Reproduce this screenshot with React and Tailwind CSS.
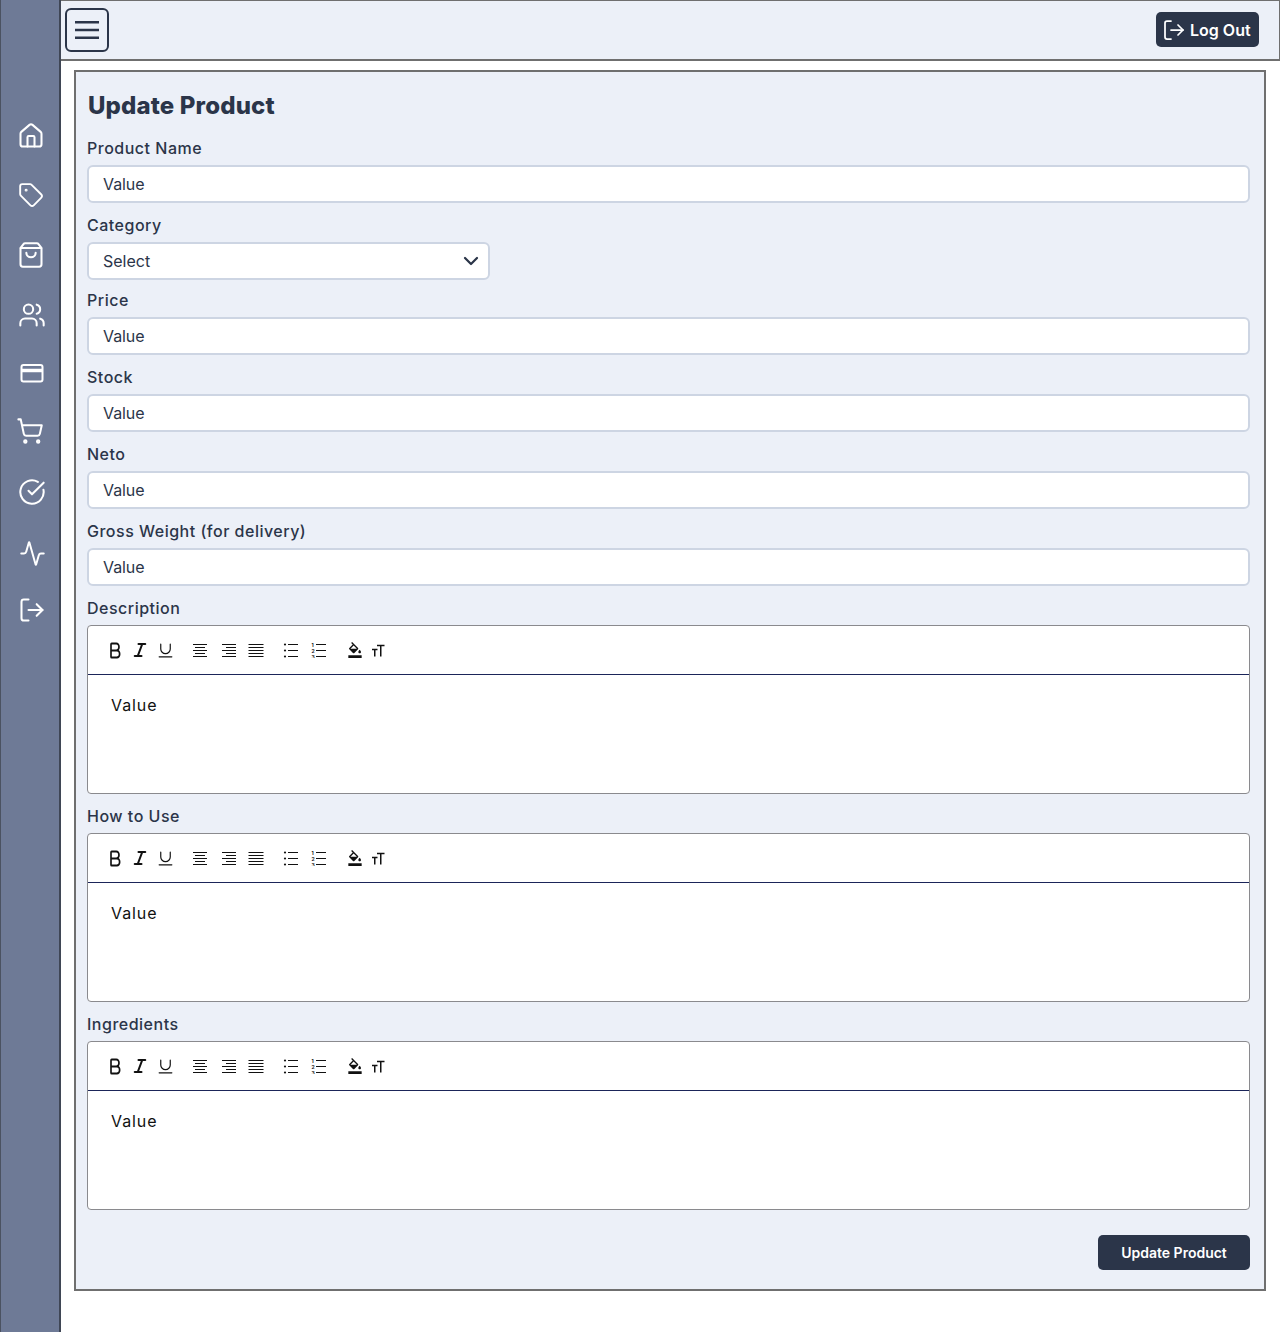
import React from 'react';
import {
  House,
  Tag,
  ShoppingBag,
  Users,
  ShoppingCart,
  CircleCheckBig,
  Activity,
  LogOut,
  ChevronDown,
  Bold,
  Italic,
  Underline,
} from 'lucide-react';
import { MdFormatColorFill } from 'react-icons/md';

const CardIcon = ({ className }) => (
  <svg viewBox="0 0 28 28" fill="none" stroke="currentColor" className={className}>
    <rect x="3.5" y="5" width="21" height="16.5" rx="2" strokeWidth="2" />
    <line x1="3.5" x2="24.5" y1="10.5" y2="10.5" strokeWidth="3.5" />
  </svg>
);

const navItems = [
  { icon: House, className: 'mt-0 ml-[16px]', size: 'w-7 h-7' },
  { icon: Tag, className: 'mt-[32px] ml-[17px]', size: 'w-[26px] h-[26px]' },
  { icon: ShoppingBag, className: 'mt-[33px] ml-[16px]', size: 'w-7 h-7' },
  { icon: Users, className: 'mt-[32px] ml-[17px]', size: 'w-7 h-7' },
  { icon: CardIcon, className: 'mt-[31px] ml-[17px]', size: 'w-7 h-7' },
  { icon: ShoppingCart, className: 'mt-[29px] ml-[15px]', size: 'w-7 h-7' },
  { icon: CircleCheckBig, className: 'mt-[33px] ml-[17px]', size: 'w-7 h-7' },
  { icon: Activity, className: 'mt-[34px] ml-[18px]', size: 'w-[27px] h-[27px]' },
  { icon: LogOut, className: 'mt-[29px] ml-[17px]', size: 'w-7 h-7' },
];

const Sidebar = () => (
  <aside className="w-[61px] shrink-0 bg-[#6e7a96] border-l border-r-2 border-l-[#4b5261] border-r-[#3f4655] pt-[122px]">
    {navItems.map((item, i) => {
      const Icon = item.icon;
      return (
        <div key={i} className={item.className}>
          <Icon className={`${item.size} text-white`} strokeWidth={1.75} />
        </div>
      );
    })}
  </aside>
);

const AlignIcon = ({ widths, align }) => (
  <svg width="16" height="15" viewBox="0 0 16 15" className="block" stroke="#111" strokeWidth="1">
    {widths.map((w, i) => {
      const x = align === 'center' ? (16 - w) / 2 : 16 - w;
      return <line key={i} x1={x} x2={x + w} y1={1.5 + i * 3} y2={1.5 + i * 3} />;
    })}
  </svg>
);

const BulletIcon = () => (
  <svg width="16" height="15" viewBox="0 0 16 15" className="block" fill="#111" stroke="#111">
    {[1.5, 7.5, 13.5].map((y) => (
      <g key={y}>
        <circle cx="2" cy={y} r="1.1" stroke="none" />
        <line x1="5" x2="15" y1={y} y2={y} />
      </g>
    ))}
  </svg>
);

const NumberIcon = () => (
  <svg width="16" height="15" viewBox="0 0 16 15" className="block" stroke="#111">
    {[1.5, 7.5, 13.5].map((y, i) => (
      <g key={y}>
        <text x="0.5" y={y + 2} fontSize="5" fontWeight="700" fontFamily="Inter, sans-serif" fill="#111" stroke="none">{i + 1}</text>
        <line x1="5" x2="15" y1={y} y2={y} />
      </g>
    ))}
  </svg>
);

const SizeIcon = () => (
  <svg width="14" height="13" viewBox="0 0 14 13" className="block" stroke="#111" fill="none" strokeWidth="1.5">
    <path d="M1 5.5h5.5M3.75 5.5V12.5" />
    <path d="M6 1.5h7.5M9.75 1.5V12.5" />
  </svg>
);

const Toolbar = () => (
  <div className="h-[49px] flex items-center border-b border-[#1b2559] text-[#111]">
    <Bold className="w-[16px] h-[21px] ml-[19px]" strokeWidth={2.5} preserveAspectRatio="none" />
    <Italic className="w-[18px] h-[18px] ml-[8px]" strokeWidth={2.75} />
    <Underline className="w-[19px] h-[19px] ml-[7px]" strokeWidth={1.5} />
    <div className="ml-[17px]"><AlignIcon widths={[14, 10, 14, 10, 14]} align="center" /></div>
    <div className="ml-[12px]"><AlignIcon widths={[14, 10, 14, 10, 14]} align="right" /></div>
    <div className="ml-[12px]"><AlignIcon widths={[15, 15, 15, 15, 15]} align="center" /></div>
    <div className="ml-[19px]"><BulletIcon /></div>
    <div className="ml-[12px]"><NumberIcon /></div>
    <MdFormatColorFill className="w-[16px] h-[16px] ml-[20px]" />
    <div className="ml-[8px]"><SizeIcon /></div>
  </div>
);

const Label = ({ children }) => (
  <label className="block text-base leading-6 font-medium text-[#2b3549] tracking-[0.5px]">
    {children}
  </label>
);

const Field = ({ label, className }) => (
  <div className={className}>
    <Label>{label}</Label>
    <div className="mt-[5px] h-[38px] bg-white border-2 border-[#cdd5e3] rounded-md px-[14px] flex items-center text-base text-[#2b3549] tracking-[-0.1px]">
      Value
    </div>
  </div>
);

const Editor = ({ label, className }) => (
  <div className={className}>
    <Label>{label}</Label>
    <div className="mt-[5px] h-[169px] bg-white border border-[#8a8a8e] rounded-[4px]">
      <Toolbar />
      <div className="pl-[23px] pt-[18px] text-base leading-6 text-[#111] tracking-[0.9px]">Value</div>
    </div>
  </div>
);

export default function App() {
  return (
    <div className="flex min-h-[1332px] bg-white font-['Inter',sans-serif]">
      <Sidebar />
      <div className="flex-1 min-w-0">
        <header className="h-[61px] bg-[#ecf0f8] border-t border-r border-[#6f6f6f] border-b-2 flex items-center justify-between pl-[4px] pr-[20px]">
          <button className="w-[44px] h-[44px] border-2 border-[#2b3549] rounded-md flex items-center justify-center text-[#2b3549]">
            <svg width="24" height="18" viewBox="0 0 24 18" stroke="currentColor" strokeWidth="2.5">
              <path d="M0 1.25h24M0 9h24M0 16.75h24" />
            </svg>
          </button>
          <button className="h-[35px] w-[103px] mb-[2px] pt-[1px] bg-[#2b3549] text-white rounded-[5px] flex items-center pl-[6px] gap-[4px] text-base font-semibold">
            <LogOut className="w-6 h-6" strokeWidth={1.75} />
            Log Out
          </button>
        </header>
        <main className="ml-[13px] mr-[14px] mt-[9px] h-[1221px] bg-[#ecf0f8] border-2 border-[#6f6f6f] pl-[11px] pr-[14px] pt-[18px]">
          <h1 className="text-2xl leading-[32px] font-extrabold text-[#2b3549] ml-[1px] tracking-[0.15px]">Update Product</h1>
          <Field label="Product Name" className="mt-[14px]" />
          <div className="mt-[10px]">
            <Label>Category</Label>
            <div className="mt-[5px] w-[403px] h-[38px] bg-white border-2 border-[#cdd5e3] rounded-md pl-[14px] pr-[5px] flex items-center justify-between text-base text-[#2b3549]">
              Select
              <ChevronDown className="w-6 h-6" strokeWidth={2.25} />
            </div>
          </div>
          <Field label="Price" className="mt-[8px]" />
          <Field label="Stock" className="mt-[10px]" />
          <Field label="Neto" className="mt-[10px]" />
          <Field label="Gross Weight (for delivery)" className="mt-[10px]" />
          <Editor label="Description" className="mt-[10px]" />
          <Editor label="How to Use" className="mt-[10px]" />
          <Editor label="Ingredients" className="mt-[10px]" />
          <div className="mt-[25px] flex justify-end">
            <button className="w-[152px] h-[35px] bg-[#2b3549] text-white rounded-[5px] text-sm font-semibold">
              Update Product
            </button>
          </div>
        </main>
      </div>
    </div>
  );
}
